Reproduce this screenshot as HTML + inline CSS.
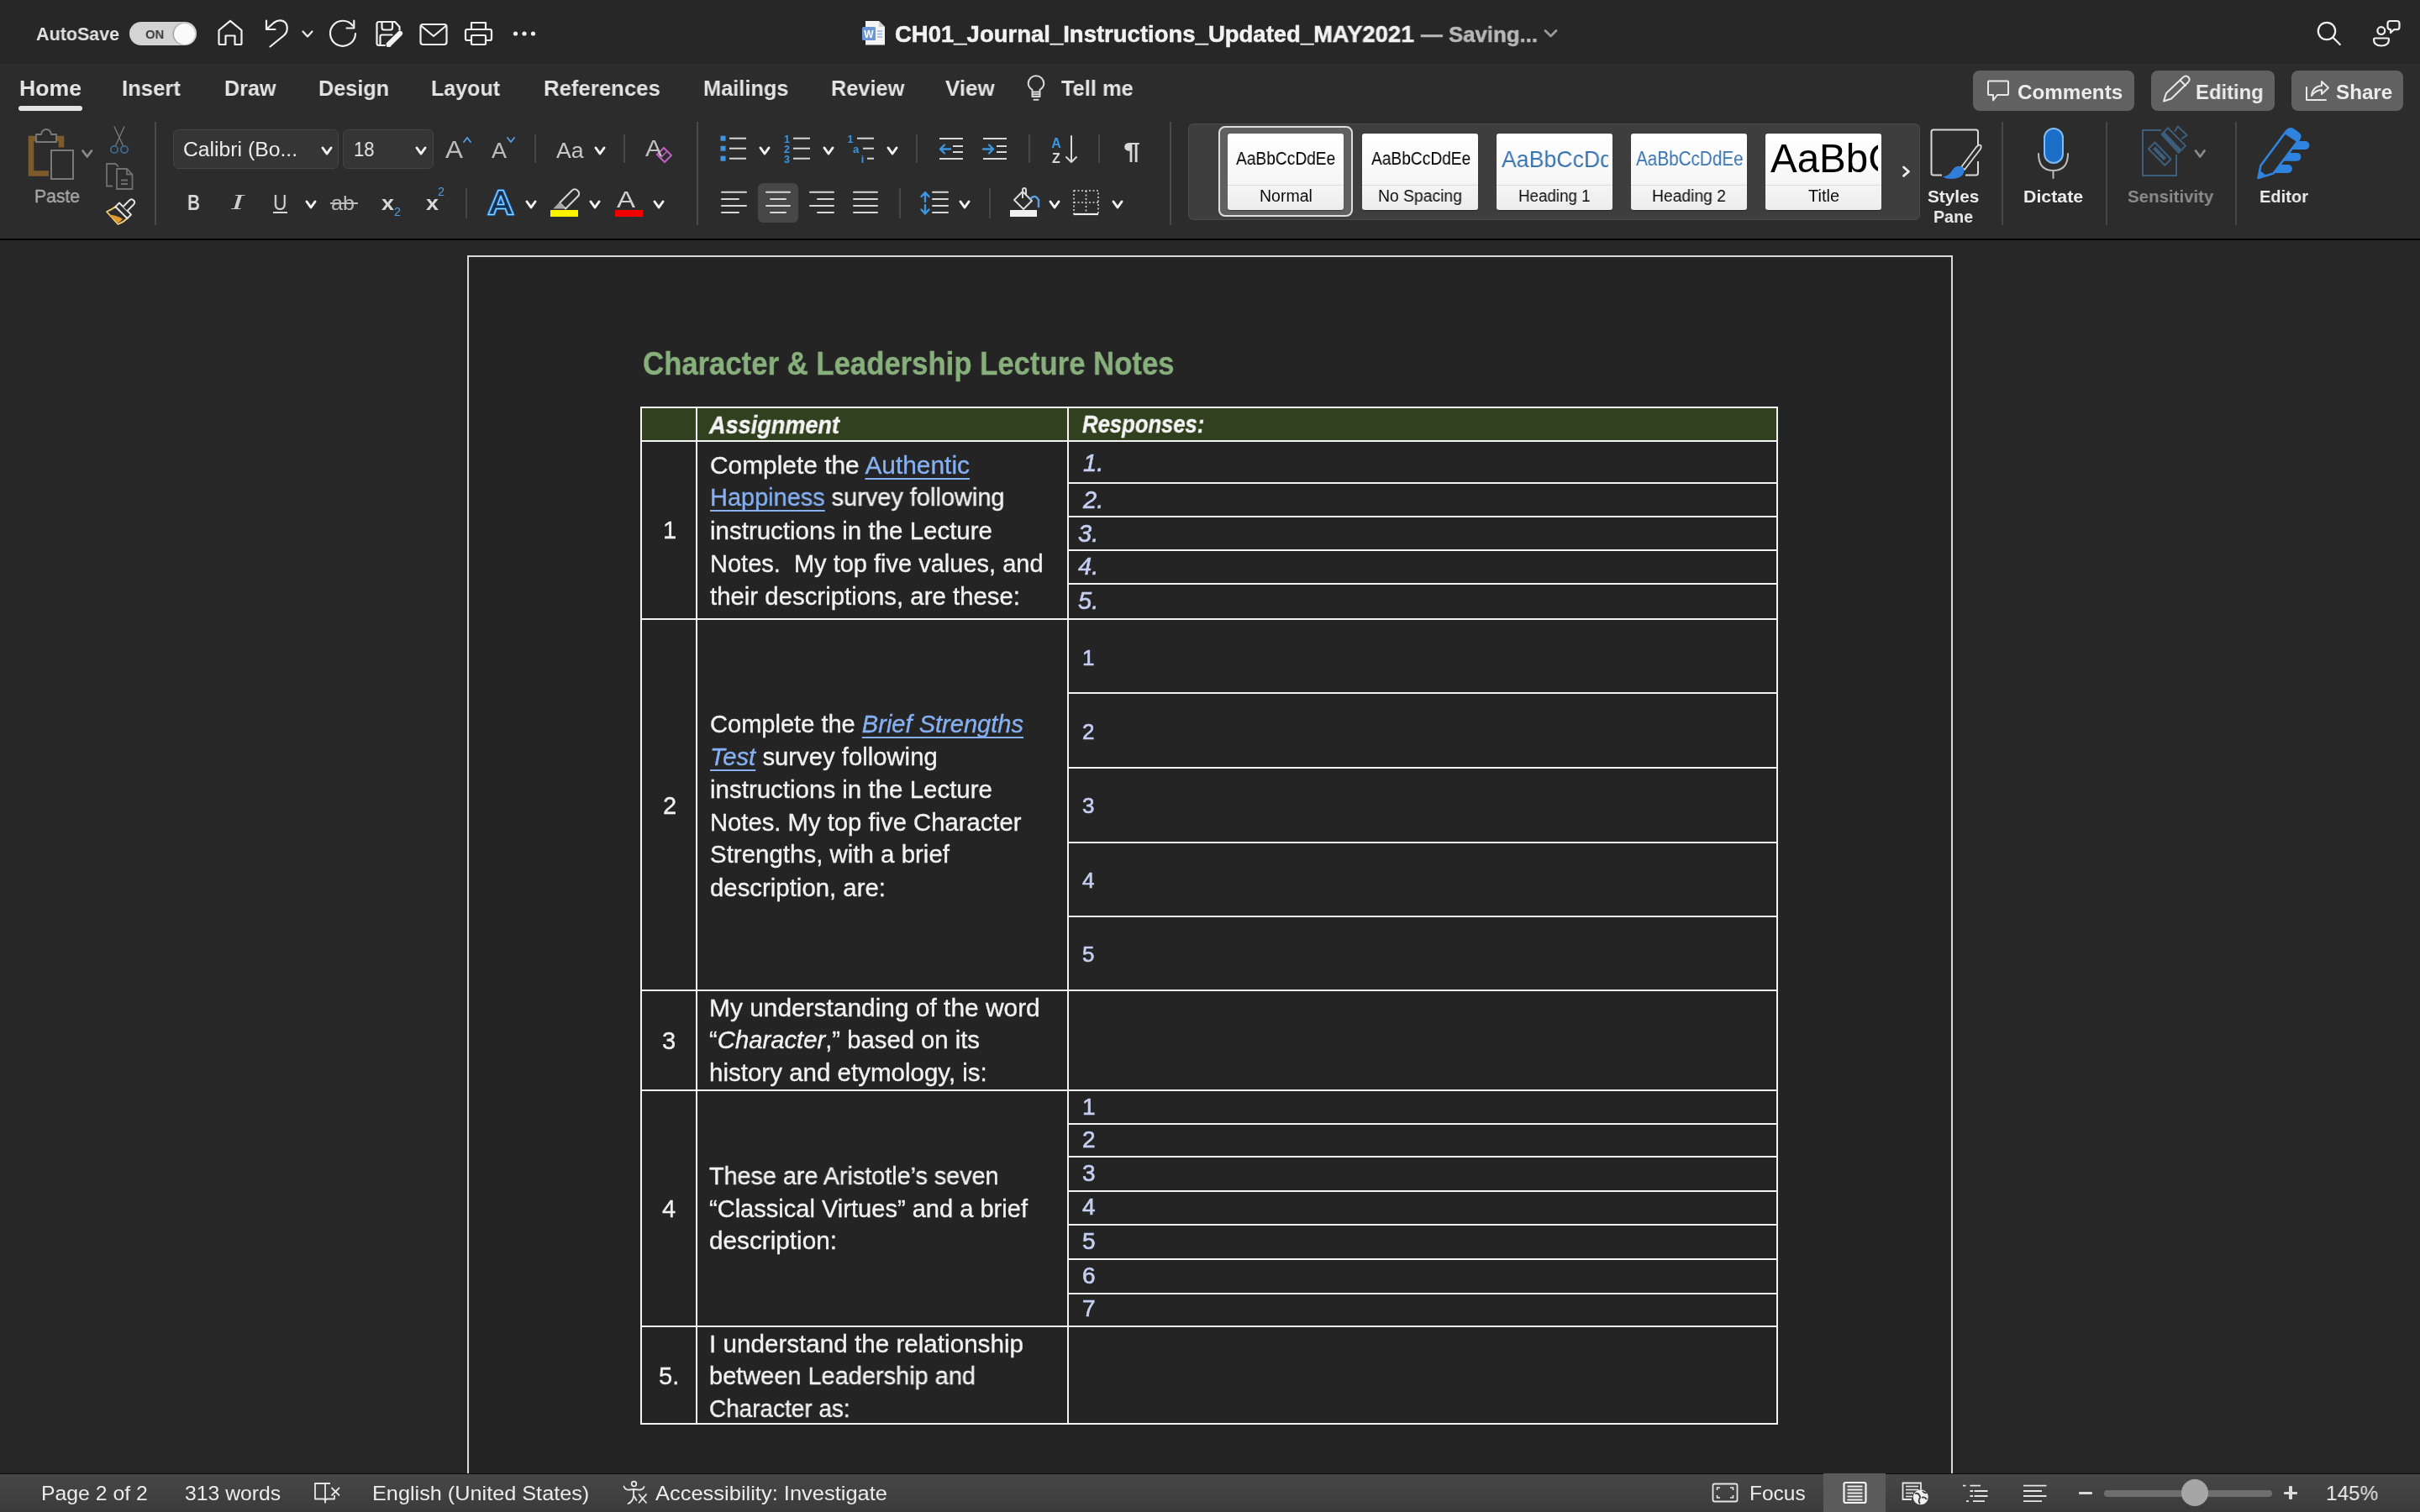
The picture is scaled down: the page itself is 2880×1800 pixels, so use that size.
<!DOCTYPE html><html><head><meta charset="utf-8"><style>
html,body{margin:0;padding:0;width:2880px;height:1800px;overflow:hidden;background:#252525;}
body{position:relative;font-family:"Liberation Sans",sans-serif;}
.t{position:absolute;white-space:pre;transform-origin:0 0;will-change:transform;}
svg{position:absolute;left:0;top:0;}
</style></head><body>
<div style="position:absolute;left:0px;top:286px;width:2880px;height:1468px;background:#262626;border-radius:0px;"></div>
<div style="position:absolute;left:556px;top:304px;width:1768px;height:1460px;background:#242424;border-radius:0px;box-sizing:border-box;border:2px solid #d9d9d9;border-bottom:none;"></div>
<div style="position:absolute;left:762px;top:484px;width:1354px;height:42px;background:#31411f;border-radius:0px;"></div>
<div style="position:absolute;left:762px;top:484px;width:1354px;height:2px;background:#f4f4f4;border-radius:0px;"></div>
<div style="position:absolute;left:762px;top:524px;width:1354px;height:2px;background:#f4f4f4;border-radius:0px;"></div>
<div style="position:absolute;left:762px;top:736px;width:1354px;height:2px;background:#f4f4f4;border-radius:0px;"></div>
<div style="position:absolute;left:762px;top:1178px;width:1354px;height:2px;background:#f4f4f4;border-radius:0px;"></div>
<div style="position:absolute;left:762px;top:1296.5px;width:1354px;height:2px;background:#f4f4f4;border-radius:0px;"></div>
<div style="position:absolute;left:762px;top:1578px;width:1354px;height:2px;background:#f4f4f4;border-radius:0px;"></div>
<div style="position:absolute;left:762px;top:1694px;width:1354px;height:2px;background:#f4f4f4;border-radius:0px;"></div>
<div style="position:absolute;left:1270px;top:574px;width:846px;height:2px;background:#f4f4f4;border-radius:0px;"></div>
<div style="position:absolute;left:1270px;top:614px;width:846px;height:2px;background:#f4f4f4;border-radius:0px;"></div>
<div style="position:absolute;left:1270px;top:654px;width:846px;height:2px;background:#f4f4f4;border-radius:0px;"></div>
<div style="position:absolute;left:1270px;top:694px;width:846px;height:2px;background:#f4f4f4;border-radius:0px;"></div>
<div style="position:absolute;left:1270px;top:824px;width:846px;height:2px;background:#f4f4f4;border-radius:0px;"></div>
<div style="position:absolute;left:1270px;top:912.5px;width:846px;height:2px;background:#f4f4f4;border-radius:0px;"></div>
<div style="position:absolute;left:1270px;top:1002px;width:846px;height:2px;background:#f4f4f4;border-radius:0px;"></div>
<div style="position:absolute;left:1270px;top:1090px;width:846px;height:2px;background:#f4f4f4;border-radius:0px;"></div>
<div style="position:absolute;left:1270px;top:1336.5px;width:846px;height:2px;background:#f4f4f4;border-radius:0px;"></div>
<div style="position:absolute;left:1270px;top:1376px;width:846px;height:2px;background:#f4f4f4;border-radius:0px;"></div>
<div style="position:absolute;left:1270px;top:1416.5px;width:846px;height:2px;background:#f4f4f4;border-radius:0px;"></div>
<div style="position:absolute;left:1270px;top:1457px;width:846px;height:2px;background:#f4f4f4;border-radius:0px;"></div>
<div style="position:absolute;left:1270px;top:1498px;width:846px;height:2px;background:#f4f4f4;border-radius:0px;"></div>
<div style="position:absolute;left:1270px;top:1538.5px;width:846px;height:2px;background:#f4f4f4;border-radius:0px;"></div>
<div style="position:absolute;left:762px;top:484px;width:2px;height:1212px;background:#f4f4f4;border-radius:0px;"></div>
<div style="position:absolute;left:828px;top:484px;width:2px;height:1212px;background:#f4f4f4;border-radius:0px;"></div>
<div style="position:absolute;left:1270px;top:484px;width:2px;height:1212px;background:#f4f4f4;border-radius:0px;"></div>
<div style="position:absolute;left:2114px;top:484px;width:2px;height:1212px;background:#f4f4f4;border-radius:0px;"></div>
<div style="position:absolute;left:0px;top:0px;width:2880px;height:76px;background:#272727;border-radius:0px;"></div>
<div style="position:absolute;left:0px;top:76px;width:2880px;height:208px;background:#2c2c2c;border-radius:0px;"></div>
<div style="position:absolute;left:0px;top:284px;width:2880px;height:2px;background:#000;border-radius:0px;"></div>
<div style="position:absolute;left:0px;top:1754px;width:2880px;height:1px;background:#0a0a0a;border-radius:0px;"></div>
<div style="position:absolute;left:0px;top:1755px;width:2880px;height:45px;background:linear-gradient(#474747,#3b3b3b);border-radius:0px;"></div>
<div style="position:absolute;left:154px;top:26px;width:80px;height:28px;background:#d4d4d4;border-radius:14px;"></div>
<div style="position:absolute;left:207px;top:27.5px;width:25px;height:25px;border-radius:50%;background:#fafafa;box-shadow:-1px 0 2px rgba(0,0,0,.35)"></div>
<div style="position:absolute;left:22px;top:126px;width:76px;height:6px;background:#e4e4e4;border-radius:3px;"></div>
<div style="position:absolute;left:2348px;top:84.3px;width:192px;height:47.5px;background:#616161;border-radius:8px;"></div>
<div style="position:absolute;left:2560px;top:84.3px;width:146.5px;height:47.5px;background:#616161;border-radius:8px;"></div>
<div style="position:absolute;left:2727px;top:84.3px;width:132.69999999999982px;height:47.5px;background:#616161;border-radius:8px;"></div>
<div style="position:absolute;left:184px;top:145px;width:2px;height:123px;background:#4a4a4a;border-radius:0px;"></div>
<div style="position:absolute;left:206px;top:154px;width:197px;height:47px;background:#353535;border-radius:6px;box-sizing:border-box;border:1px solid #444;"></div>
<div style="position:absolute;left:408px;top:154px;width:108px;height:47px;background:#353535;border-radius:6px;box-sizing:border-box;border:1px solid #444;"></div>
<div style="position:absolute;left:636px;top:160px;width:2px;height:34px;background:#474747;border-radius:0px;"></div>
<div style="position:absolute;left:742px;top:160px;width:2px;height:34px;background:#474747;border-radius:0px;"></div>
<div style="position:absolute;left:324.5px;top:252px;width:17px;height:2px;background:#d8d8d8;border-radius:0px;"></div>
<div style="position:absolute;left:393px;top:241px;width:33px;height:2px;background:#bdbdbd;border-radius:0px;"></div>
<div style="position:absolute;left:554px;top:224px;width:2px;height:36px;background:#474747;border-radius:0px;"></div>
<div style="position:absolute;left:655px;top:250px;width:33px;height:8px;background:#fff200;border-radius:0px;"></div>
<div style="position:absolute;left:732px;top:250px;width:32.5px;height:8px;background:#f20000;border-radius:0px;"></div>
<div style="position:absolute;left:829px;top:145px;width:2px;height:123px;background:#4a4a4a;border-radius:0px;"></div>
<div style="position:absolute;left:1090px;top:160px;width:2px;height:34px;background:#474747;border-radius:0px;"></div>
<div style="position:absolute;left:1224px;top:160px;width:2px;height:34px;background:#474747;border-radius:0px;"></div>
<div style="position:absolute;left:1307px;top:160px;width:2px;height:34px;background:#474747;border-radius:0px;"></div>
<div style="position:absolute;left:1392px;top:145px;width:2px;height:123px;background:#4a4a4a;border-radius:0px;"></div>
<div style="position:absolute;left:902px;top:218px;width:48px;height:47px;background:#474747;border-radius:6px;"></div>
<div style="position:absolute;left:1070px;top:224px;width:2px;height:36px;background:#474747;border-radius:0px;"></div>
<div style="position:absolute;left:1177px;top:224px;width:2px;height:36px;background:#474747;border-radius:0px;"></div>
<div style="position:absolute;left:1202px;top:250px;width:32px;height:8px;background:#f0f0f0;border-radius:0px;"></div>
<div style="position:absolute;left:1414px;top:146.5px;width:871px;height:115.5px;background:#3e3e3e;border-radius:6px;box-sizing:border-box;border:1px solid #4a4a4a;"></div>
<div style="position:absolute;left:1450px;top:150.3px;width:160px;height:107.4px;background:#606060;border-radius:8px;box-sizing:border-box;border:2.5px solid #dedede;"></div>
<div style="position:absolute;left:1460.7px;top:158.7px;width:138.3px;height:91.3px;border-radius:3px;background:linear-gradient(#ffffff,#f7f7f7 60%,#ececec);overflow:hidden;box-shadow:0 0.5px 1px rgba(0,0,0,.4)"><div style="position:absolute;left:0;right:0;top:61.5px;height:1px;background:#dcdcdc"></div><div style="position:absolute;left:0;top:0;width:133.5px;height:61px;overflow:hidden"><div class="t" style="left:10.8px;top:20.3px;font-size:21.3px;line-height:21.3px;color:#000;transform:scaleX(0.9)">AaBbCcDdEe</div></div></div>
<div style="position:absolute;left:1621px;top:158.7px;width:138.3px;height:91.3px;border-radius:3px;background:linear-gradient(#ffffff,#f7f7f7 60%,#ececec);overflow:hidden;box-shadow:0 0.5px 1px rgba(0,0,0,.4)"><div style="position:absolute;left:0;right:0;top:61.5px;height:1px;background:#dcdcdc"></div><div style="position:absolute;left:0;top:0;width:133.5px;height:61px;overflow:hidden"><div class="t" style="left:11.0px;top:20.3px;font-size:21.3px;line-height:21.3px;color:#000;transform:scaleX(0.9)">AaBbCcDdEe</div></div></div>
<div style="position:absolute;left:1780.8px;top:158.7px;width:138.3px;height:91.3px;border-radius:3px;background:linear-gradient(#ffffff,#f7f7f7 60%,#ececec);overflow:hidden;box-shadow:0 0.5px 1px rgba(0,0,0,.4)"><div style="position:absolute;left:0;right:0;top:61.5px;height:1px;background:#dcdcdc"></div><div style="position:absolute;left:0;top:0;width:133.5px;height:61px;overflow:hidden"><div class="t" style="left:6.2px;top:17.1px;font-size:27.5px;line-height:27.5px;color:#3a75b0;transform:scaleX(0.97)">AaBbCcDdEe</div></div></div>
<div style="position:absolute;left:1940.7px;top:158.7px;width:138.3px;height:91.3px;border-radius:3px;background:linear-gradient(#ffffff,#f7f7f7 60%,#ececec);overflow:hidden;box-shadow:0 0.5px 1px rgba(0,0,0,.4)"><div style="position:absolute;left:0;right:0;top:61.5px;height:1px;background:#dcdcdc"></div><div style="position:absolute;left:0;top:0;width:133.5px;height:61px;overflow:hidden"><div class="t" style="left:6.3px;top:19.8px;font-size:23px;line-height:23px;color:#3a75b0;transform:scaleX(0.9)">AaBbCcDdEeFf</div></div></div>
<div style="position:absolute;left:2101px;top:158.7px;width:138.3px;height:91.3px;border-radius:3px;background:linear-gradient(#ffffff,#f7f7f7 60%,#ececec);overflow:hidden;box-shadow:0 0.5px 1px rgba(0,0,0,.4)"><div style="position:absolute;left:0;right:0;top:61.5px;height:1px;background:#dcdcdc"></div><div style="position:absolute;left:0;top:0;width:133.5px;height:61px;overflow:hidden"><div class="t" style="left:5.5px;top:6.4px;font-size:47.5px;line-height:47.5px;color:#000;transform:scaleX(1.0)">AaBbCcDd</div></div></div>
<div style="position:absolute;left:2382px;top:145px;width:2px;height:123px;background:#474747;border-radius:0px;"></div>
<div style="position:absolute;left:2432px;top:152px;width:24px;height:43px;border-radius:12px;background:#1a6ec8;border:2px solid #7fbaf2;box-sizing:border-box"></div>
<div style="position:absolute;left:2506px;top:145px;width:2px;height:123px;background:#474747;border-radius:0px;"></div>
<div style="position:absolute;left:2660px;top:145px;width:2px;height:123px;background:#474747;border-radius:0px;"></div>
<div style="position:absolute;left:2170px;top:1754px;width:74px;height:46px;background:#5b5b5b;border-radius:0px;"></div>
<div style="position:absolute;left:2474px;top:1775.5px;width:15.5px;height:3.5px;background:#dcdcdc;border-radius:1px;"></div>
<div style="position:absolute;left:2503.6px;top:1773.5px;width:200.4px;height:8px;background:#6e6e6e;border-radius:4px;"></div>
<div style="position:absolute;left:2596px;top:1761px;width:32px;height:32px;border-radius:50%;background:#a6a6a6"></div>
<div style="position:absolute;left:2718px;top:1775.5px;width:15.8px;height:3.5px;background:#dcdcdc;border-radius:1px;"></div>
<div style="position:absolute;left:2724.2px;top:1769.3px;width:3.5px;height:15.8px;background:#dcdcdc;border-radius:1px;"></div>
<svg width="2880" height="1800" viewBox="0 0 2880 1800">
<path d="M260.5 36 L274 24.8 L287.5 36 L287.5 51.5 Q287.5 53 286 53 L279.5 53 L279.5 42.5 L268.5 42.5 L268.5 53 L262 53 Q260.5 53 260.5 51.5 Z" fill="none" stroke="#f0f0f0" stroke-width="2.2" stroke-linecap="round" stroke-linejoin="round"/>
<path d="M317 24.5 L317 35 L327.5 35" fill="none" stroke="#f0f0f0" stroke-width="2.2" stroke-linecap="round" stroke-linejoin="round"/><path d="M317.5 34.5 L326 27 C332 22.5 340 24 341.5 31 C342.5 36 340.5 40 337.5 42.5 L321.5 55.5" fill="none" stroke="#f0f0f0" stroke-width="2.2" stroke-linecap="round" stroke-linejoin="round"/>
<path d="M360.5 37.5 L366 43.5 L371.5 37.5" fill="none" stroke="#f0f0f0" stroke-width="2.2" stroke-linecap="round" stroke-linejoin="round"/>
<path d="M419.8 30.5 A15 15 0 1 0 423 40" fill="none" stroke="#f0f0f0" stroke-width="2.2" stroke-linecap="round" stroke-linejoin="round"/><path d="M421.3 24.5 L421.3 33.5 L412.5 33.5" fill="none" stroke="#f0f0f0" stroke-width="2.2" stroke-linecap="round" stroke-linejoin="round"/>
<path d="M458 54 L451 54 Q448.5 54 448.5 51.5 L448.5 28.5 Q448.5 26 451 26 L470 26 L475.5 32 L475.5 35.5" fill="none" stroke="#f0f0f0" stroke-width="2.2" stroke-linecap="round" stroke-linejoin="round"/><path d="M454.5 26 L454.5 33 Q454.5 35.5 457 35.5 L464.5 35.5 Q467 35.5 467 33 L467 26" fill="none" stroke="#f0f0f0" stroke-width="2.2" stroke-linecap="round" stroke-linejoin="round"/><path d="M452.5 53 L452.5 43.5 Q452.5 41.5 454.5 41.5 L466.5 41.5" fill="none" stroke="#f0f0f0" stroke-width="2.2" stroke-linecap="round" stroke-linejoin="round"/>
<path d="M462.8 52.8 L476 39.8" stroke="#f2f2f2" stroke-width="6.2" stroke-linecap="round"/><path d="M460 55.8 L460.5 50.5 L465.5 55.5 Z" fill="#f2f2f2"/>
<rect x="500.5" y="29" width="31" height="24" rx="3" fill="none" stroke="#f0f0f0" stroke-width="2.2" stroke-linecap="round" stroke-linejoin="round"/><path d="M501.5 31 L516 43 L530.5 31" fill="none" stroke="#f0f0f0" stroke-width="2.2" stroke-linecap="round" stroke-linejoin="round"/>
<path d="M561 35 L561 27 L578 27 L578 35" fill="none" stroke="#f0f0f0" stroke-width="2.2" stroke-linecap="round" stroke-linejoin="round"/><path d="M561 48 L556 48 Q554 48 554 46 L554 37 Q554 35 556 35 L583 35 Q585 35 585 37 L585 46 Q585 48 583 48 L578 48" fill="none" stroke="#f0f0f0" stroke-width="2.2" stroke-linecap="round" stroke-linejoin="round"/><rect x="561" y="42" width="17" height="11" rx="1" fill="none" stroke="#f0f0f0" stroke-width="2.2" stroke-linecap="round" stroke-linejoin="round"/>
<circle cx="613.5" cy="40" r="2.6" fill="#f0f0f0"/>
<circle cx="624" cy="40" r="2.6" fill="#f0f0f0"/>
<circle cx="634.5" cy="40" r="2.6" fill="#f0f0f0"/>
<path d="M1030 25 L1046 25 L1053 32 L1053 53.5 L1030 53.5 Z" fill="#f4f4f4"/><path d="M1046 25 L1046 32 L1053 32" fill="#cfcfcf"/>
<rect x="1026" y="32" width="16" height="16" rx="1.5" fill="#6d96d4"/><text x="1034" y="45" font-family="Liberation Sans" font-size="12" font-weight="bold" fill="#fff" text-anchor="middle">W</text>
<path d="M1044 37 L1050 37 M1044 40.5 L1050 40.5 M1044 44 L1050 44" stroke="#8fb0e0" stroke-width="1.3"/>
<path d="M1839 36.5 L1845.5 43 L1852 36.5" fill="none" stroke="#9a9a9a" stroke-width="2.8" stroke-linecap="round" stroke-linejoin="round"/>
<circle cx="2769" cy="37" r="10.2" fill="none" stroke="#f0f0f0" stroke-width="2.2" stroke-linecap="round" stroke-linejoin="round"/><path d="M2776.8 45 L2784.8 53" fill="none" stroke="#f0f0f0" stroke-width="2.2" stroke-linecap="round" stroke-linejoin="round"/>
<circle cx="2833.8" cy="36.6" r="4.4" fill="none" stroke="#f0f0f0" stroke-width="2.2" stroke-linecap="round" stroke-linejoin="round"/><path d="M2826.5 45.5 L2841.5 45.5 Q2843 45.5 2843 47 Q2843 54.5 2834 54.5 Q2825 54.5 2825 47 Q2825 45.5 2826.5 45.5 Z" fill="none" stroke="#f0f0f0" stroke-width="2.2" stroke-linecap="round" stroke-linejoin="round"/>
<path d="M2844.5 25 L2852.5 25 Q2855.5 25 2855.5 28 L2855.5 32.2 Q2855.5 35.2 2852.5 35.2 L2849 35.2 L2845 39 L2845 35.2 Q2841.5 35 2841.5 32 L2841.5 28 Q2841.5 25 2844.5 25 Z" fill="none" stroke="#f0f0f0" stroke-width="2.2" stroke-linecap="round" stroke-linejoin="round"/>
<path d="M1228.5 109.5 L1228.5 107 Q1223.7 103.5 1223.7 99.5 A9.3 9.3 0 0 1 1242.3 99.5 Q1242.3 103.5 1237.5 107 L1237.5 109.5 Z M1228.5 109.5 L1228.5 115 L1237.5 115 L1237.5 109.5 M1228.5 112.3 L1237.5 112.3" fill="none" stroke="#d8d8d8" stroke-width="2" stroke-linecap="round" stroke-linejoin="round"/><path d="M1230.5 118.8 L1235.5 118.8" fill="none" stroke="#d8d8d8" stroke-width="2" stroke-linecap="round" stroke-linejoin="round"/>
<path d="M2367 96.5 L2389 96.5 Q2390 96.5 2390 97.5 L2390 112 Q2390 113 2389 113 L2377 113 L2372 119.5 L2372 113 L2367 113 Q2366 113 2366 112 L2366 97.5 Q2366 96.5 2367 96.5 Z" fill="none" stroke="#e8e8e8" stroke-width="2" stroke-linecap="round" stroke-linejoin="round"/>
<path d="M2575 120.5 L2578 111 L2598 92 Q2601.5 89 2604.5 92 Q2607 95 2604 98 L2584 117.5 Z M2594.5 95.5 L2601 102" fill="none" stroke="#e8e8e8" stroke-width="2" stroke-linecap="round" stroke-linejoin="round"/>
<path d="M2745 104 L2745 119 L2768 119" fill="none" stroke="#e8e8e8" stroke-width="2" stroke-linecap="round" stroke-linejoin="round"/><path d="M2751 114 Q2752 103 2763 102 L2763 97 L2771 104.5 L2763 112 L2763 107 Q2756 107 2751 114 Z" fill="none" stroke="#e8e8e8" stroke-width="2" stroke-linecap="round" stroke-linejoin="round"/>
<path d="M44 165 L37 165 L37 206.5 L58 206.5 M67 165 L73 165 L73 175.5" fill="none" stroke="#7d5b2a" stroke-width="6.5"/>
<path d="M43 169 L43 160 L49 160 Q50 154 55 154 Q60 154 61 160 L67 160 L67 169 Z" fill="#2c2c2c" stroke="#7a7a7a" stroke-width="1.8" stroke-linejoin="round"/>
<rect x="61" y="179" width="26" height="34" fill="none" stroke="#7a7a7a" stroke-width="2"/>
<path d="M98.5 179.5 L103.75 186.5 L109.0 179.5" fill="none" stroke="#8a8a8a" stroke-width="2.8" stroke-linecap="round" stroke-linejoin="round"/>
<path d="M136 150.5 L146.5 173.5 M148 150.5 L137.5 173.5" fill="none" stroke="#7d7d7d" stroke-width="1.3"/><circle cx="136" cy="178" r="4.2" fill="none" stroke="#3d6b91" stroke-width="1.8"/><circle cx="148" cy="178" r="4.2" fill="none" stroke="#3d6b91" stroke-width="1.8"/>
<path d="M134 221.5 L127 221.5 L127 195 L137.5 195 L141 198.5" fill="none" stroke="#707070" stroke-width="1.8"/><path d="M139 201 L151 201 L157.5 207.5 L157.5 225 L139 225 Z M151 201 L151 207.5 L157.5 207.5 M144 214.5 L152 214.5 M144 219 L152 219" fill="none" stroke="#707070" stroke-width="1.8"/>
<path d="M127 252 Q133 249.5 137.5 246 L151.5 260 Q147.5 264 140.5 267 Z" fill="#2c2c2c" stroke="#f2d27a" stroke-width="1.8" stroke-linejoin="round"/><path d="M129.5 255.5 Q138 256 146 260.5 Q144 263.5 140.5 265.5 Z" fill="#e39a2a"/>
<path d="M137.5 246 L142 241.5 L156 255.5 L151.5 260 Z" fill="#2c2c2c" stroke="#e6e6e6" stroke-width="1.8" stroke-linejoin="round"/><path d="M146.5 246 L154 238.5 Q156.5 236 159 238.5 Q161.5 241 159 243.5 L151.5 251" fill="#2c2c2c" stroke="#e6e6e6" stroke-width="1.8" stroke-linejoin="round"/>
<path d="M384 176 L389.0 183 L394 176" fill="none" stroke="#f2f2f2" stroke-width="3" stroke-linecap="round" stroke-linejoin="round"/>
<path d="M496 176 L501.0 183 L506 176" fill="none" stroke="#f2f2f2" stroke-width="3" stroke-linecap="round" stroke-linejoin="round"/>
<path d="M552 169 L556 164 L560 169" fill="none" stroke="#4f9ae0" stroke-width="2" stroke-linecap="round"/>
<path d="M604 164 L608 169 L612 164" fill="none" stroke="#4f9ae0" stroke-width="2" stroke-linecap="round"/>
<path d="M709 176 L714.0 183 L719 176" fill="none" stroke="#f2f2f2" stroke-width="3" stroke-linecap="round" stroke-linejoin="round"/>
<path d="M782 184 L790 176 L799 185 L791 193 Z" fill="none" stroke="#c060c0" stroke-width="2"/><path d="M786 188 L794 180" stroke="#c060c0" stroke-width="1.5"/>
<path d="M365 240 L370.0 247 L375 240" fill="none" stroke="#f2f2f2" stroke-width="3" stroke-linecap="round" stroke-linejoin="round"/>
<path d="M581 255.5 L593 226.5 L599 226.5 L611 255.5 L604 255.5 L601.5 248.5 L590.5 248.5 L588 255.5 Z M592.3 243.5 L599.7 243.5 L596 233.5 Z" fill="#1b2b40" fill-rule="evenodd" stroke="#1f74c8" stroke-width="3.2" stroke-linejoin="round"/>
<path d="M581 255.5 L593 226.5 L599 226.5 L611 255.5 L604 255.5 L601.5 248.5 L590.5 248.5 L588 255.5 Z M592.3 243.5 L599.7 243.5 L596 233.5 Z" fill="none" stroke="#9cd6ff" stroke-width="1.1" stroke-linejoin="round"/>
<path d="M627 240 L632.0 247 L637 240" fill="none" stroke="#f2f2f2" stroke-width="3" stroke-linecap="round" stroke-linejoin="round"/>
<path d="M666 241.5 L680.5 227 Q684 223.5 687.5 227 Q691 230.5 687.5 234 L673 248.5 Z" fill="none" stroke="#d8d8d8" stroke-width="2" stroke-linejoin="round"/><path d="M658.3 248.5 L665.8 240.8 L672 247 L670.5 248.5 Z" fill="#a8a8a8"/>
<path d="M703 240 L708.0 247 L713 240" fill="none" stroke="#f2f2f2" stroke-width="3" stroke-linecap="round" stroke-linejoin="round"/>
<path d="M779 240 L784.0 247 L789 240" fill="none" stroke="#f2f2f2" stroke-width="3" stroke-linecap="round" stroke-linejoin="round"/>
<rect x="857.5" y="161.7" width="6" height="6" fill="#3d95e0"/><path d="M868 164.7 L888 164.7" stroke="#d8d8d8" stroke-width="2" stroke-linecap="butt"/>
<rect x="857.5" y="173.7" width="6" height="6" fill="#3d95e0"/><path d="M868 176.7 L888 176.7" stroke="#d8d8d8" stroke-width="2" stroke-linecap="butt"/>
<rect x="857.5" y="185.7" width="6" height="6" fill="#3d95e0"/><path d="M868 188.7 L888 188.7" stroke="#d8d8d8" stroke-width="2" stroke-linecap="butt"/>
<path d="M905 176 L910.0 183 L915 176" fill="none" stroke="#f2f2f2" stroke-width="3" stroke-linecap="round" stroke-linejoin="round"/>
<text x="936.5" y="169.7" font-family="Liberation Sans" font-size="12.5" font-weight="bold" fill="#3d95e0" text-anchor="middle">1</text><path d="M944 164.7 L964 164.7" stroke="#d8d8d8" stroke-width="2"/>
<text x="936.5" y="181.7" font-family="Liberation Sans" font-size="12.5" font-weight="bold" fill="#3d95e0" text-anchor="middle">2</text><path d="M944 176.7 L964 176.7" stroke="#d8d8d8" stroke-width="2"/>
<text x="936.5" y="193.7" font-family="Liberation Sans" font-size="12.5" font-weight="bold" fill="#3d95e0" text-anchor="middle">3</text><path d="M944 188.7 L964 188.7" stroke="#d8d8d8" stroke-width="2"/>
<path d="M981 176 L986.0 183 L991 176" fill="none" stroke="#f2f2f2" stroke-width="3" stroke-linecap="round" stroke-linejoin="round"/>
<text x="1012" y="170" font-family="Liberation Sans" font-size="12.5" font-weight="bold" fill="#3d95e0" text-anchor="middle">1</text><path d="M1020 164.7 L1040 164.7" stroke="#d8d8d8" stroke-width="2"/>
<text x="1018.5" y="181.5" font-family="Liberation Sans" font-size="13" font-weight="bold" fill="#3d95e0" text-anchor="middle">a</text><path d="M1027 176.7 L1040 176.7" stroke="#d8d8d8" stroke-width="2"/>
<text x="1026.5" y="193.5" font-family="Liberation Sans" font-size="12.5" font-weight="bold" fill="#3d95e0" text-anchor="middle">i</text><path d="M1032 188.7 L1040 188.7" stroke="#d8d8d8" stroke-width="2"/>
<path d="M1057 176 L1062.0 183 L1067 176" fill="none" stroke="#f2f2f2" stroke-width="3" stroke-linecap="round" stroke-linejoin="round"/>
<path d="M1118 165 L1146 165 M1134 174 L1146 174 M1134 181 L1146 181 M1118 189 L1146 189" stroke="#d8d8d8" stroke-width="2"/><path d="M1131 177.5 L1119 177.5 M1124 172.5 L1119 177.5 L1124 182.5" fill="none" stroke="#3d95e0" stroke-width="2.4" stroke-linecap="round" stroke-linejoin="round"/>
<path d="M1170 165 L1198 165 M1186 174 L1198 174 M1186 181 L1198 181 M1170 189 L1198 189" stroke="#d8d8d8" stroke-width="2"/><path d="M1170 177.5 L1182 177.5 M1177 172.5 L1182 177.5 L1177 182.5" fill="none" stroke="#3d95e0" stroke-width="2.4" stroke-linecap="round" stroke-linejoin="round"/>
<text x="1257" y="176" font-family="Liberation Sans" font-size="16" font-weight="bold" fill="#3d95e0" text-anchor="middle">A</text><text x="1257" y="194" font-family="Liberation Sans" font-size="16" font-weight="bold" fill="#d8d8d8" text-anchor="middle">Z</text>
<path d="M1275 162 L1275 193 M1269 187 L1275 193 L1281 187" fill="none" stroke="#d8d8d8" stroke-width="2" stroke-linecap="round" stroke-linejoin="round"/>
<path d="M859 228.8 L888 228.8" stroke="#d8d8d8" stroke-width="2" stroke-linecap="round"/>
<path d="M859 236.9 L879 236.9" stroke="#d8d8d8" stroke-width="2" stroke-linecap="round"/>
<path d="M859 245 L888 245" stroke="#d8d8d8" stroke-width="2" stroke-linecap="round"/>
<path d="M859 252.9 L879 252.9" stroke="#d8d8d8" stroke-width="2" stroke-linecap="round"/>
<path d="M912 228.8 L940 228.8" stroke="#d8d8d8" stroke-width="2" stroke-linecap="round"/>
<path d="M917 236.9 L935 236.9" stroke="#d8d8d8" stroke-width="2" stroke-linecap="round"/>
<path d="M912 245 L940 245" stroke="#d8d8d8" stroke-width="2" stroke-linecap="round"/>
<path d="M917 252.9 L935 252.9" stroke="#d8d8d8" stroke-width="2" stroke-linecap="round"/>
<path d="M964 228.8 L992 228.8" stroke="#d8d8d8" stroke-width="2" stroke-linecap="round"/>
<path d="M973 236.9 L992 236.9" stroke="#d8d8d8" stroke-width="2" stroke-linecap="round"/>
<path d="M964 245 L992 245" stroke="#d8d8d8" stroke-width="2" stroke-linecap="round"/>
<path d="M973 252.9 L992 252.9" stroke="#d8d8d8" stroke-width="2" stroke-linecap="round"/>
<path d="M1016 228.8 L1044 228.8" stroke="#d8d8d8" stroke-width="2" stroke-linecap="round"/>
<path d="M1016 236.9 L1044 236.9" stroke="#d8d8d8" stroke-width="2" stroke-linecap="round"/>
<path d="M1016 245 L1044 245" stroke="#d8d8d8" stroke-width="2" stroke-linecap="round"/>
<path d="M1016 252.9 L1044 252.9" stroke="#d8d8d8" stroke-width="2" stroke-linecap="round"/>
<path d="M1110 228.8 L1128 228.8" stroke="#d8d8d8" stroke-width="2" stroke-linecap="round"/>
<path d="M1110 236.9 L1128 236.9" stroke="#d8d8d8" stroke-width="2" stroke-linecap="round"/>
<path d="M1110 245 L1128 245" stroke="#d8d8d8" stroke-width="2" stroke-linecap="round"/>
<path d="M1110 252.9 L1128 252.9" stroke="#d8d8d8" stroke-width="2" stroke-linecap="round"/>
<path d="M1101 230 L1101 240 M1096.5 234 L1101 229 L1105.5 234 M1101 244 L1101 254 M1096.5 249.5 L1101 254.5 L1105.5 249.5" fill="none" stroke="#3d95e0" stroke-width="2.4" stroke-linecap="round" stroke-linejoin="round"/>
<path d="M1143 240 L1148.0 247 L1153 240" fill="none" stroke="#f2f2f2" stroke-width="3" stroke-linecap="round" stroke-linejoin="round"/>
<path d="M1207 238 L1217 228 L1228 239 L1218 249 Z" fill="none" stroke="#d8d8d8" stroke-width="2" stroke-linejoin="round"/><path d="M1217 236 L1217 226 Q1217 224 1219 224 Q1221 224 1221 226 L1221 232" fill="none" stroke="#d8d8d8" stroke-width="2"/><path d="M1227 236 Q1232 231 1236 238 L1236 246" fill="none" stroke="#5aa0e0" stroke-width="2.5" stroke-linecap="round"/>
<path d="M1250 240 L1255.0 247 L1260 240" fill="none" stroke="#f2f2f2" stroke-width="3" stroke-linecap="round" stroke-linejoin="round"/>
<rect x="1278" y="227" width="29" height="28" fill="none" stroke="#d8d8d8" stroke-width="1.6" stroke-dasharray="2 2.5"/><path d="M1292.5 227 L1292.5 255 M1278 241 L1307 241" stroke="#d8d8d8" stroke-width="1.6" stroke-dasharray="2 2.5"/><path d="M1278 255 L1307 255" stroke="#f0f0f0" stroke-width="2.2"/>
<path d="M1325 240 L1330.0 247 L1335 240" fill="none" stroke="#f2f2f2" stroke-width="3" stroke-linecap="round" stroke-linejoin="round"/>
<path d="M2265.5 199 L2271.5 204.2 L2265.5 209.4" fill="none" stroke="#f0f0f0" stroke-width="2.8" stroke-linecap="round" stroke-linejoin="round"/>
<path d="M2311 208.5 L2301 208.5 Q2298.5 208.5 2298.5 206 L2298.5 157 Q2298.5 154.5 2301 154.5 L2351.5 154.5 Q2354 154.5 2354 157 L2354 174 M2354 192 L2354 206 Q2354 208.5 2351.5 208.5 L2339 208.5" fill="none" stroke="#d8d8d8" stroke-width="2"/>
<path d="M2334 199 L2352 175 Q2356 171 2357.5 173.5 Q2358.5 176 2355 180 L2338 202 Z" fill="#2c2c2c" stroke="#d8d8d8" stroke-width="1.8" stroke-linejoin="round"/>
<path d="M2312 210.5 Q2320 209 2323 203 Q2327 197 2333 198 Q2339 200 2337 206 Q2334 213 2322 213 Q2316 213 2312 210.5 Z" fill="#2f7fd8"/>
<path d="M2426 183 Q2426 203 2443.5 203 Q2461 203 2461 183 M2443.5 203 L2443.5 212" fill="none" stroke="#bdbdbd" stroke-width="2" stroke-linecap="round"/>
<path d="M2572 155 L2550 155 L2550 209 L2590 209 L2590 184" fill="none" stroke="#3c5f7e" stroke-width="2"/>
<path d="M2556.8 177.3 L2564.5 169.5 L2583.6 189.5 L2576.4 196.8 Z" fill="none" stroke="#3c5f7e" stroke-width="2" stroke-linejoin="round"/><path d="M2562 177.5 L2565 174.5 L2578 188 L2575 191 Z" fill="#3c5f7e"/>
<path d="M2572.7 160 L2580 152.3 L2601 173.6 L2592.7 181.8 Z" fill="#2c2c2c" stroke="#3c5f7e" stroke-width="2" stroke-linejoin="round"/><path d="M2573 160 L2576 157 L2596 178 L2593 181 Z" fill="#3c5f7e"/>
<path d="M2588 156.8 L2591.8 150.5 L2602.7 160.9 L2595.9 165.5" fill="none" stroke="#3c5f7e" stroke-width="2" stroke-linejoin="round"/>
<path d="M2613 179.5 L2618.25 186.5 L2623.5 179.5" fill="none" stroke="#8a8a8a" stroke-width="2.8" stroke-linecap="round" stroke-linejoin="round"/>
<path d="M2722 173 L2743.5 173" stroke="#2f84e0" stroke-width="9.8" stroke-linecap="round"/>
<path d="M2712 186.8 L2733.5 186.8" stroke="#2f84e0" stroke-width="9.8" stroke-linecap="round"/>
<path d="M2700 201 L2723 201" stroke="#2f84e0" stroke-width="9.8" stroke-linecap="round"/>
<path d="M2687.5 212 L2690.5 197 L2721 156 Q2725 151.5 2729.5 154.5 L2735 158.5 Q2739 162 2736 166 L2705.5 206.5 Z" fill="#2c2c2c" stroke="#2f84e0" stroke-width="2.6" stroke-linejoin="round"/>
<path d="M2721 156 Q2725 151.5 2729.5 154.5 L2735 158.5 Q2739 162 2736 166 L2733.5 169 L2718.5 159 Z" fill="#2f84e0"/><path d="M2687.5 212 L2689.5 203 L2696 208 Z" fill="#2f84e0"/>
<path d="M387 1766 L375 1766 L375 1784.5 L385 1784.5 Q387 1784.5 387 1787 L387 1789.5 M387 1766 L387 1787 M387 1766 L393 1766 M387 1787 Q387 1784.5 389.5 1784.5 L398 1784.5 L398 1780" fill="none" stroke="#e6e6e6" stroke-width="1.8" stroke-linejoin="round"/><path d="M394.5 1771 L404 1780.5 M404 1771 L394.5 1780.5" stroke="#e6e6e6" stroke-width="1.8"/>
<circle cx="754.5" cy="1766.5" r="2.8" fill="none" stroke="#e6e6e6" stroke-width="1.8"/><path d="M742.5 1769.5 Q744 1774 749 1773.5 Q754.5 1772.5 760 1773.5 Q765 1774 766.5 1770 M754 1774 L754 1781 Q753 1788 747.5 1790 M754.5 1781 L757.5 1786" fill="none" stroke="#e6e6e6" stroke-width="1.8" stroke-linecap="round" stroke-linejoin="round"/><path d="M760 1778.5 L769.5 1789.5 M769.5 1778.5 L760 1789.5" stroke="#e6e6e6" stroke-width="1.8"/>
<rect x="2038.5" y="1766.5" width="29" height="21" rx="2" fill="none" stroke="#e6e6e6" stroke-width="1.8"/><path d="M2043.5 1774 L2043.5 1771 L2047 1771 M2062.5 1774 L2062.5 1771 L2059 1771 M2043.5 1780 L2043.5 1783 L2047 1783 M2062.5 1780 L2062.5 1783 L2059 1783" stroke="#e6e6e6" stroke-width="1.6" fill="none"/>
<rect x="2194.5" y="1765" width="26" height="24" rx="2" fill="none" stroke="#f4f4f4" stroke-width="2.2"/><path d="M2198.5 1769.5 L2216.5 1769.5" stroke="#f4f4f4" stroke-width="1.8"/><path d="M2198.5 1773.5 L2216.5 1773.5" stroke="#f4f4f4" stroke-width="1.8"/><path d="M2198.5 1777.5 L2216.5 1777.5" stroke="#f4f4f4" stroke-width="1.8"/><path d="M2198.5 1781.5 L2216.5 1781.5" stroke="#f4f4f4" stroke-width="1.8"/><path d="M2198.5 1785.5 L2216.5 1785.5" stroke="#f4f4f4" stroke-width="1.8"/>
<path d="M2275 1785 L2264.5 1785 L2264.5 1765.5 L2286 1765.5 L2286 1773" fill="none" stroke="#e6e6e6" stroke-width="1.8"/><path d="M2268 1769.5 L2283 1769.5" stroke="#e6e6e6" stroke-width="1.6"/><path d="M2268 1773.5 L2283 1773.5" stroke="#e6e6e6" stroke-width="1.6"/><path d="M2268 1777.5 L2277 1777.5" stroke="#e6e6e6" stroke-width="1.6"/><path d="M2268 1781.5 L2276 1781.5" stroke="#e6e6e6" stroke-width="1.6"/><circle cx="2285.8" cy="1782.3" r="9" fill="#f0f0f0"/><path d="M2279 1778 Q2283 1777 2284 1780 Q2286 1782 2284 1785 Q2283 1788 2285 1790 M2288 1775 Q2290 1778 2293 1777 M2287 1783 Q2290 1781 2293 1785" fill="none" stroke="#3d3d3d" stroke-width="1.8"/>
<path d="M2336 1768.6 L2339.5 1768.6 M2344.5 1768.6 L2357 1768.6 M2344.5 1775 L2348 1775 M2349.5 1775 L2365.5 1775 M2344.5 1781 L2348 1781 M2349.5 1781 L2365.5 1781 M2340 1787.2 L2343 1787.2 M2348 1787.2 L2362 1787.2" stroke="#e6e6e6" stroke-width="1.8"/>
<path d="M2408 1768.6 L2435.5 1768.6 M2408 1775 L2430 1775 M2408 1781 L2435.5 1781 M2408 1787.2 L2430 1787.2" stroke="#e6e6e6" stroke-width="1.8"/>
</svg>
<div id="t0" class="t" style="left:765.0px;top:413.8px;font-size:38px;line-height:38px;color:#88b07c;font-weight:bold;font-style:normal;transform:scaleX(0.9131);-webkit-text-stroke:0.35px currentColor;">Character &amp; Leadership Lecture Notes</div>
<div id="t1" class="t" style="left:843.7px;top:491.5px;font-size:29px;line-height:29px;color:#f4f4f4;font-weight:bold;font-style:italic;transform:scaleX(0.9338);-webkit-text-stroke:0.35px currentColor;">Assignment</div>
<div id="t2" class="t" style="left:1287.7px;top:490.5px;font-size:29px;line-height:29px;color:#f4f4f4;font-weight:bold;font-style:italic;transform:scaleX(0.8839);-webkit-text-stroke:0.35px currentColor;">Responses:</div>
<div id="t3" class="t" style="left:844.5px;top:539.5px;font-size:29px;line-height:29px;color:#f2f2f2;font-weight:normal;font-style:normal;transform:scaleX(1.0304);-webkit-text-stroke:0.35px currentColor;">Complete the <span style="color:#86b0f2;text-decoration:underline;text-underline-offset:5px;text-decoration-thickness:2px;text-decoration-skip-ink:none">Authentic</span></div>
<div id="t4" class="t" style="left:844.5px;top:578.3px;font-size:29px;line-height:29px;color:#f2f2f2;font-weight:normal;font-style:normal;transform:scaleX(0.9974);-webkit-text-stroke:0.35px currentColor;"><span style="color:#86b0f2;text-decoration:underline;text-underline-offset:5px;text-decoration-thickness:2px;text-decoration-skip-ink:none">Happiness</span> survey following</div>
<div id="t5" class="t" style="left:844.5px;top:617.5px;font-size:29px;line-height:29px;color:#f2f2f2;font-weight:normal;font-style:normal;transform:scaleX(1.0167);-webkit-text-stroke:0.35px currentColor;">instructions in the Lecture</div>
<div id="t6" class="t" style="left:844.5px;top:657.1px;font-size:29px;line-height:29px;color:#f2f2f2;font-weight:normal;font-style:normal;transform:scaleX(0.9999);-webkit-text-stroke:0.35px currentColor;">Notes.  My top five values, and</div>
<div id="t7" class="t" style="left:844.5px;top:695.5px;font-size:29px;line-height:29px;color:#f2f2f2;font-weight:normal;font-style:normal;transform:scaleX(1.0129);-webkit-text-stroke:0.35px currentColor;">their descriptions, are these:</div>
<div id="t8" class="t" style="left:789.0px;top:616.5px;font-size:29px;line-height:29px;color:#f2f2f2;font-weight:normal;font-style:normal;-webkit-text-stroke:0.35px currentColor;">1</div>
<div id="t9" class="t" style="left:1289.0px;top:537.0px;font-size:29px;line-height:29px;color:#c5cff2;font-weight:normal;font-style:italic;-webkit-text-stroke:0.6px #c5cff2;">1.</div>
<div id="t10" class="t" style="left:1289.0px;top:580.8px;font-size:29px;line-height:29px;color:#c5cff2;font-weight:normal;font-style:italic;-webkit-text-stroke:0.6px #c5cff2;">2.</div>
<div id="t11" class="t" style="left:1283.0px;top:621.0px;font-size:29px;line-height:29px;color:#c5cff2;font-weight:normal;font-style:italic;-webkit-text-stroke:0.6px #c5cff2;">3.</div>
<div id="t12" class="t" style="left:1283.0px;top:660.2px;font-size:29px;line-height:29px;color:#c5cff2;font-weight:normal;font-style:italic;-webkit-text-stroke:0.6px #c5cff2;">4.</div>
<div id="t13" class="t" style="left:1283.0px;top:700.5px;font-size:29px;line-height:29px;color:#c5cff2;font-weight:normal;font-style:italic;-webkit-text-stroke:0.6px #c5cff2;">5.</div>
<div id="t14" class="t" style="left:844.8px;top:847.9px;font-size:29px;line-height:29px;color:#f2f2f2;font-weight:normal;font-style:normal;transform:scaleX(1.0017);-webkit-text-stroke:0.35px currentColor;">Complete the <span style="color:#86b0f2;font-style:italic;text-decoration:underline;text-underline-offset:5px;text-decoration-thickness:2px;text-decoration-skip-ink:none">Brief Strengths</span></div>
<div id="t15" class="t" style="left:844.8px;top:886.9px;font-size:29px;line-height:29px;color:#f2f2f2;font-weight:normal;font-style:normal;transform:scaleX(1.0096);-webkit-text-stroke:0.35px currentColor;"><span style="color:#86b0f2;font-style:italic;text-decoration:underline;text-underline-offset:5px;text-decoration-thickness:2px;text-decoration-skip-ink:none">Test</span> survey following</div>
<div id="t16" class="t" style="left:844.8px;top:925.7px;font-size:29px;line-height:29px;color:#f2f2f2;font-weight:normal;font-style:normal;transform:scaleX(1.0167);-webkit-text-stroke:0.35px currentColor;">instructions in the Lecture</div>
<div id="t17" class="t" style="left:844.8px;top:965.3px;font-size:29px;line-height:29px;color:#f2f2f2;font-weight:normal;font-style:normal;transform:scaleX(1.0079);-webkit-text-stroke:0.35px currentColor;">Notes. My top five Character</div>
<div id="t18" class="t" style="left:844.8px;top:1003.4px;font-size:29px;line-height:29px;color:#f2f2f2;font-weight:normal;font-style:normal;transform:scaleX(1.0161);-webkit-text-stroke:0.35px currentColor;">Strengths, with a brief</div>
<div id="t19" class="t" style="left:844.8px;top:1043.1px;font-size:29px;line-height:29px;color:#f2f2f2;font-weight:normal;font-style:normal;transform:scaleX(1.0129);-webkit-text-stroke:0.35px currentColor;">description, are:</div>
<div id="t20" class="t" style="left:789.0px;top:944.7px;font-size:29px;line-height:29px;color:#f2f2f2;font-weight:normal;font-style:normal;-webkit-text-stroke:0.35px currentColor;">2</div>
<div id="t21" class="t" style="left:1288.0px;top:770.4px;font-size:26px;line-height:26px;color:#c5cff2;font-weight:normal;font-style:normal;-webkit-text-stroke:0.6px #c5cff2;">1</div>
<div id="t22" class="t" style="left:1288.0px;top:858.3px;font-size:26px;line-height:26px;color:#c5cff2;font-weight:normal;font-style:normal;-webkit-text-stroke:0.6px #c5cff2;">2</div>
<div id="t23" class="t" style="left:1288.0px;top:945.6px;font-size:26px;line-height:26px;color:#c5cff2;font-weight:normal;font-style:normal;-webkit-text-stroke:0.6px #c5cff2;">3</div>
<div id="t24" class="t" style="left:1288.0px;top:1035.0px;font-size:26px;line-height:26px;color:#c5cff2;font-weight:normal;font-style:normal;-webkit-text-stroke:0.6px #c5cff2;">4</div>
<div id="t25" class="t" style="left:1288.0px;top:1123.4px;font-size:26px;line-height:26px;color:#c5cff2;font-weight:normal;font-style:normal;-webkit-text-stroke:0.6px #c5cff2;">5</div>
<div id="t26" class="t" style="left:844.4px;top:1185.5px;font-size:29px;line-height:29px;color:#f2f2f2;font-weight:normal;font-style:normal;transform:scaleX(1.0305);-webkit-text-stroke:0.35px currentColor;">My understanding of the word</div>
<div id="t27" class="t" style="left:844.4px;top:1224.4px;font-size:29px;line-height:29px;color:#f2f2f2;font-weight:normal;font-style:normal;transform:scaleX(1.0089);-webkit-text-stroke:0.35px currentColor;">“<i>Character</i>,” based on its</div>
<div id="t28" class="t" style="left:844.4px;top:1263.3px;font-size:29px;line-height:29px;color:#f2f2f2;font-weight:normal;font-style:normal;transform:scaleX(1.0177);-webkit-text-stroke:0.35px currentColor;">history and etymology, is:</div>
<div id="t29" class="t" style="left:788.0px;top:1224.5px;font-size:29px;line-height:29px;color:#f2f2f2;font-weight:normal;font-style:normal;-webkit-text-stroke:0.35px currentColor;">3</div>
<div id="t30" class="t" style="left:844.4px;top:1385.5px;font-size:29px;line-height:29px;color:#f2f2f2;font-weight:normal;font-style:normal;transform:scaleX(0.9909);-webkit-text-stroke:0.35px currentColor;">These are Aristotle’s seven</div>
<div id="t31" class="t" style="left:844.4px;top:1424.5px;font-size:29px;line-height:29px;color:#f2f2f2;font-weight:normal;font-style:normal;transform:scaleX(1.0020);-webkit-text-stroke:0.35px currentColor;">“Classical Virtues” and a brief</div>
<div id="t32" class="t" style="left:844.4px;top:1463.3px;font-size:29px;line-height:29px;color:#f2f2f2;font-weight:normal;font-style:normal;transform:scaleX(1.0249);-webkit-text-stroke:0.35px currentColor;">description:</div>
<div id="t33" class="t" style="left:788.0px;top:1424.5px;font-size:29px;line-height:29px;color:#f2f2f2;font-weight:normal;font-style:normal;-webkit-text-stroke:0.35px currentColor;">4</div>
<div id="t34" class="t" style="left:1288.0px;top:1303.7px;font-size:28px;line-height:28px;color:#c5cff2;font-weight:normal;font-style:normal;-webkit-text-stroke:0.6px #c5cff2;">1</div>
<div id="t35" class="t" style="left:1288.0px;top:1343.0px;font-size:28px;line-height:28px;color:#c5cff2;font-weight:normal;font-style:normal;-webkit-text-stroke:0.6px #c5cff2;">2</div>
<div id="t36" class="t" style="left:1288.0px;top:1382.6px;font-size:28px;line-height:28px;color:#c5cff2;font-weight:normal;font-style:normal;-webkit-text-stroke:0.6px #c5cff2;">3</div>
<div id="t37" class="t" style="left:1288.0px;top:1423.3px;font-size:28px;line-height:28px;color:#c5cff2;font-weight:normal;font-style:normal;-webkit-text-stroke:0.6px #c5cff2;">4</div>
<div id="t38" class="t" style="left:1288.0px;top:1464.1px;font-size:28px;line-height:28px;color:#c5cff2;font-weight:normal;font-style:normal;-webkit-text-stroke:0.6px #c5cff2;">5</div>
<div id="t39" class="t" style="left:1288.0px;top:1504.8px;font-size:28px;line-height:28px;color:#c5cff2;font-weight:normal;font-style:normal;-webkit-text-stroke:0.6px #c5cff2;">6</div>
<div id="t40" class="t" style="left:1288.0px;top:1544.3px;font-size:28px;line-height:28px;color:#c5cff2;font-weight:normal;font-style:normal;-webkit-text-stroke:0.6px #c5cff2;">7</div>
<div id="t41" class="t" style="left:844.4px;top:1585.5px;font-size:29px;line-height:29px;color:#f2f2f2;font-weight:normal;font-style:normal;transform:scaleX(1.0219);-webkit-text-stroke:0.35px currentColor;">I understand the relationship</div>
<div id="t42" class="t" style="left:844.4px;top:1624.4px;font-size:29px;line-height:29px;color:#f2f2f2;font-weight:normal;font-style:normal;transform:scaleX(0.9980);-webkit-text-stroke:0.35px currentColor;">between Leadership and</div>
<div id="t43" class="t" style="left:844.4px;top:1662.5px;font-size:29px;line-height:29px;color:#f2f2f2;font-weight:normal;font-style:normal;transform:scaleX(0.9628);-webkit-text-stroke:0.35px currentColor;">Character as:</div>
<div id="t44" class="t" style="left:784.4px;top:1624.4px;font-size:29px;line-height:29px;color:#f2f2f2;font-weight:normal;font-style:normal;-webkit-text-stroke:0.35px currentColor;">5.</div>
<div id="t45" class="t" style="left:42.6px;top:29.6px;font-size:21.7px;line-height:21.7px;color:#e2e2e2;font-weight:bold;font-style:normal;transform:scaleX(0.9897);">AutoSave</div>
<div id="t46" class="t" style="left:173.0px;top:32.7px;font-size:15.5px;line-height:15.5px;color:#3a3a3a;font-weight:bold;font-style:normal;transform:scaleX(0.9591);">ON</div>
<div id="t47" class="t" style="left:1064.5px;top:27.1px;font-size:27.5px;line-height:27.5px;color:#f2f2f2;font-weight:bold;font-style:normal;transform:scaleX(0.9993);-webkit-text-stroke:0.5px #f2f2f2;">CH01_Journal_Instructions_Updated_MAY2021</div>
<div id="t48" class="t" style="left:1691.0px;top:27.9px;font-size:26.6px;line-height:26.6px;color:#b8b8b8;font-weight:bold;font-style:normal;transform:scaleX(0.9696);-webkit-text-stroke:0.5px #b8b8b8;">— Saving...</div>
<div id="t49" class="t" style="left:23.0px;top:91.7px;font-size:26.3px;line-height:26.3px;color:#e4e4e4;font-weight:bold;font-style:normal;transform:scaleX(1.0128);">Home</div>
<div id="t50" class="t" style="left:145.0px;top:91.7px;font-size:26.3px;line-height:26.3px;color:#e4e4e4;font-weight:bold;font-style:normal;transform:scaleX(0.9773);">Insert</div>
<div id="t51" class="t" style="left:267.4px;top:91.7px;font-size:26.3px;line-height:26.3px;color:#e4e4e4;font-weight:bold;font-style:normal;transform:scaleX(0.9578);">Draw</div>
<div id="t52" class="t" style="left:378.8px;top:91.7px;font-size:26.3px;line-height:26.3px;color:#e4e4e4;font-weight:bold;font-style:normal;transform:scaleX(0.9602);">Design</div>
<div id="t53" class="t" style="left:513.0px;top:91.7px;font-size:26.3px;line-height:26.3px;color:#e4e4e4;font-weight:bold;font-style:normal;transform:scaleX(0.9512);">Layout</div>
<div id="t54" class="t" style="left:646.6px;top:91.7px;font-size:26.3px;line-height:26.3px;color:#e4e4e4;font-weight:bold;font-style:normal;transform:scaleX(0.9789);">References</div>
<div id="t55" class="t" style="left:837.0px;top:91.7px;font-size:26.3px;line-height:26.3px;color:#e4e4e4;font-weight:bold;font-style:normal;transform:scaleX(0.9648);">Mailings</div>
<div id="t56" class="t" style="left:988.7px;top:91.7px;font-size:26.3px;line-height:26.3px;color:#e4e4e4;font-weight:bold;font-style:normal;transform:scaleX(0.9631);">Review</div>
<div id="t57" class="t" style="left:1124.8px;top:91.7px;font-size:26.3px;line-height:26.3px;color:#e4e4e4;font-weight:bold;font-style:normal;transform:scaleX(0.9873);">View</div>
<div id="t58" class="t" style="left:1262.8px;top:91.7px;font-size:26.3px;line-height:26.3px;color:#e4e4e4;font-weight:bold;font-style:normal;transform:scaleX(0.9665);">Tell me</div>
<div id="t59" class="t" style="left:2400.8px;top:98.0px;font-size:24.2px;line-height:24.2px;color:#ececec;font-weight:bold;font-style:normal;transform:scaleX(1.0016);">Comments</div>
<div id="t60" class="t" style="left:2613.0px;top:98.0px;font-size:24.2px;line-height:24.2px;color:#ececec;font-weight:bold;font-style:normal;transform:scaleX(0.9835);">Editing</div>
<div id="t61" class="t" style="left:2779.6px;top:98.0px;font-size:24.2px;line-height:24.2px;color:#ececec;font-weight:bold;font-style:normal;transform:scaleX(0.9965);">Share</div>
<div id="t62" class="t" style="left:41.0px;top:223.2px;font-size:22px;line-height:22px;color:#a8a8a8;font-weight:normal;font-style:normal;transform:scaleX(0.9597);-webkit-text-stroke:0.4px #a8a8a8;">Paste</div>
<div id="t63" class="t" style="left:218.0px;top:165.5px;font-size:24.7px;line-height:24.7px;color:#ececec;font-weight:normal;font-style:normal;transform:scaleX(1.0013);">Calibri (Bo...</div>
<div id="t64" class="t" style="left:420.5px;top:165.5px;font-size:24.7px;line-height:24.7px;color:#ececec;font-weight:normal;font-style:normal;transform:scaleX(0.8919);">18</div>
<div id="t65" class="t" style="left:529.5px;top:163.0px;font-size:30px;line-height:30px;color:#bdbdbd;font-weight:normal;font-style:normal;transform:scaleX(1.0492);">A</div>
<div id="t66" class="t" style="left:585.0px;top:167.2px;font-size:25px;line-height:25px;color:#bdbdbd;font-weight:normal;font-style:normal;transform:scaleX(1.0787);">A</div>
<div id="t67" class="t" style="left:662.4px;top:166.8px;font-size:25px;line-height:25px;color:#c8c8c8;font-weight:normal;font-style:normal;transform:scaleX(1.0656);">Aa</div>
<div id="t68" class="t" style="left:767.5px;top:163.3px;font-size:28px;line-height:28px;color:#c0c0c0;font-weight:normal;font-style:normal;transform:scaleX(1.0702);">A</div>
<div id="t69" class="t" style="left:223.0px;top:228.8px;font-size:25px;line-height:25px;color:#d8d8d8;font-weight:bold;font-style:normal;transform:scaleX(0.8304);">B</div>
<div id="t70" class="t" style="left:274.5px;top:228.0px;font-size:26px;line-height:26px;color:#cfcfcf;font-weight:normal;font-style:italic;transform:scaleX(1.7297);font-family:'Liberation Serif',serif;">I</div>
<div id="t71" class="t" style="left:324.5px;top:228.8px;font-size:25px;line-height:25px;color:#d8d8d8;font-weight:normal;font-style:normal;transform:scaleX(0.9135);">U</div>
<div id="t72" class="t" style="left:394.0px;top:229.7px;font-size:24px;line-height:24px;color:#bdbdbd;font-weight:normal;font-style:normal;transform:scaleX(1.0486);">ab</div>
<div id="t73" class="t" style="left:454.0px;top:229.7px;font-size:24px;line-height:24px;color:#d8d8d8;font-weight:bold;font-style:normal;transform:scaleX(1.1228);">x</div>
<div id="t74" class="t" style="left:469.0px;top:244.6px;font-size:14px;line-height:14px;color:#4f9ae0;font-weight:normal;font-style:normal;transform:scaleX(1.0261);">2</div>
<div id="t75" class="t" style="left:507.0px;top:229.7px;font-size:24px;line-height:24px;color:#d8d8d8;font-weight:bold;font-style:normal;transform:scaleX(1.1228);">x</div>
<div id="t76" class="t" style="left:521.0px;top:221.1px;font-size:14px;line-height:14px;color:#4f9ae0;font-weight:normal;font-style:normal;transform:scaleX(1.0261);">2</div>
<div id="t77" class="t" style="left:734.0px;top:224.3px;font-size:28px;line-height:28px;color:#d0d0d0;font-weight:normal;font-style:normal;transform:scaleX(1.1773);">A</div>
<div id="t78" class="t" style="left:1337.0px;top:166.3px;font-size:28px;line-height:28px;color:#d8d8d8;font-weight:bold;font-style:normal;transform:scaleX(1.2839);">¶</div>
<div id="t79" class="t" style="left:1498.6px;top:223.5px;font-size:19.5px;line-height:19.5px;color:#0a0a0a;font-weight:normal;font-style:normal;transform:scaleX(0.9945);">Normal</div>
<div id="t80" class="t" style="left:1640.2px;top:223.5px;font-size:19.5px;line-height:19.5px;color:#0a0a0a;font-weight:normal;font-style:normal;transform:scaleX(0.9918);">No Spacing</div>
<div id="t81" class="t" style="left:1807.2px;top:223.5px;font-size:19.5px;line-height:19.5px;color:#0a0a0a;font-weight:normal;font-style:normal;transform:scaleX(0.9628);">Heading 1</div>
<div id="t82" class="t" style="left:1965.9px;top:223.5px;font-size:19.5px;line-height:19.5px;color:#0a0a0a;font-weight:normal;font-style:normal;transform:scaleX(0.9898);">Heading 2</div>
<div id="t83" class="t" style="left:2151.7px;top:223.5px;font-size:19.5px;line-height:19.5px;color:#0a0a0a;font-weight:normal;font-style:normal;transform:scaleX(1.0242);">Title</div>
<div id="t84" class="t" style="left:2294.0px;top:224.1px;font-size:20.8px;line-height:20.8px;color:#ececec;font-weight:bold;font-style:normal;transform:scaleX(0.9954);">Styles</div>
<div id="t85" class="t" style="left:2301.0px;top:247.7px;font-size:20.8px;line-height:20.8px;color:#ececec;font-weight:bold;font-style:normal;transform:scaleX(0.9453);">Pane</div>
<div id="t86" class="t" style="left:2408.4px;top:224.1px;font-size:20.8px;line-height:20.8px;color:#ececec;font-weight:bold;font-style:normal;transform:scaleX(1.0265);">Dictate</div>
<div id="t87" class="t" style="left:2531.7px;top:224.1px;font-size:20.8px;line-height:20.8px;color:#8c8c8c;font-weight:bold;font-style:normal;transform:scaleX(0.9834);">Sensitivity</div>
<div id="t88" class="t" style="left:2688.6px;top:224.1px;font-size:20.8px;line-height:20.8px;color:#ececec;font-weight:bold;font-style:normal;transform:scaleX(0.9654);">Editor</div>
<div id="t89" class="t" style="left:48.8px;top:1766.3px;font-size:24.5px;line-height:24.5px;color:#ececec;font-weight:normal;font-style:normal;transform:scaleX(1.0117);">Page 2 of 2</div>
<div id="t90" class="t" style="left:219.8px;top:1766.3px;font-size:24.5px;line-height:24.5px;color:#ececec;font-weight:normal;font-style:normal;transform:scaleX(1.0102);">313 words</div>
<div id="t91" class="t" style="left:443.0px;top:1766.3px;font-size:24.5px;line-height:24.5px;color:#ececec;font-weight:normal;font-style:normal;transform:scaleX(1.0308);">English (United States)</div>
<div id="t92" class="t" style="left:779.8px;top:1766.3px;font-size:24.5px;line-height:24.5px;color:#ececec;font-weight:normal;font-style:normal;transform:scaleX(1.0394);">Accessibility: Investigate</div>
<div id="t93" class="t" style="left:2081.5px;top:1766.3px;font-size:24.5px;line-height:24.5px;color:#ececec;font-weight:normal;font-style:normal;transform:scaleX(0.9967);">Focus</div>
<div id="t94" class="t" style="left:2768.4px;top:1766.3px;font-size:24.5px;line-height:24.5px;color:#ececec;font-weight:normal;font-style:normal;transform:scaleX(0.9909);">145%</div>
</body></html>
